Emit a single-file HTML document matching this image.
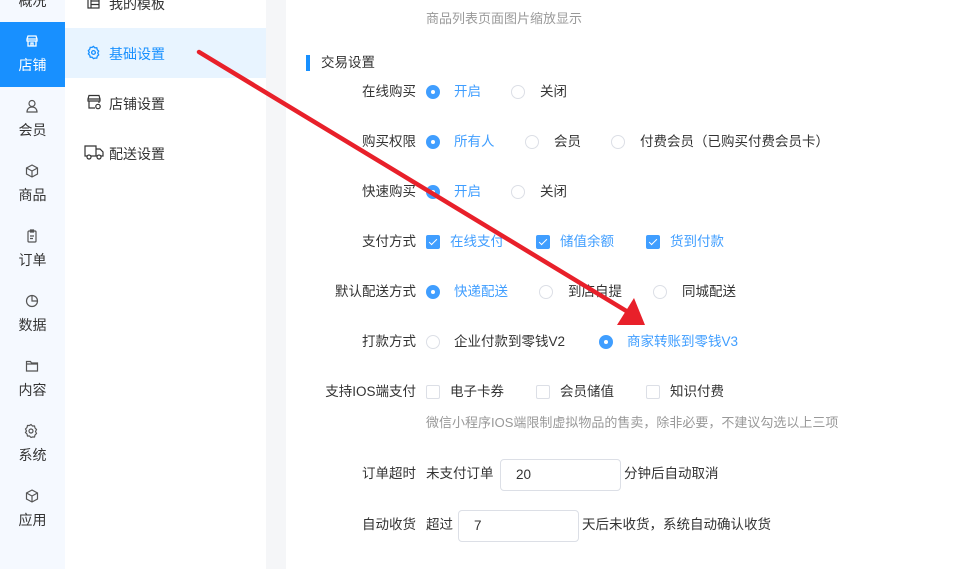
<!DOCTYPE html>
<html><head><meta charset="utf-8"><style>
*{margin:0;padding:0;box-sizing:border-box}
body{width:977px;height:569px;overflow:hidden;position:relative;background:#fff;font-family:"Liberation Sans","Noto Sans CJK SC",sans-serif;color:#333}
.a{position:absolute;white-space:nowrap}
#nav{position:absolute;left:0;top:0;width:65px;height:569px;background:#f5f9ff}
.ni{position:absolute;left:0;width:65px;text-align:center;font-size:14px;color:#333}
#sub{position:absolute;left:65px;top:0;width:201px;height:569px;background:#fff}
#gap{position:absolute;left:266px;top:0;width:20px;height:569px;background:#f5f6f8}
.t{font-size:13.5px;line-height:16px;margin-top:-8px}
.h{font-size:13px;line-height:16px;margin-top:-8px;color:#999}
.lbl{font-size:13.5px;line-height:16px;margin-top:-8px;text-align:right;width:120px;color:#333}
.r{position:absolute;width:14px;height:14px;border:1px solid #dcdfe6;border-radius:50%;margin:-7px 0 0 -7px;background:#fff}
.r.on{background:#409eff;border-color:#409eff}
.r.on:after{content:"";position:absolute;left:4px;top:4px;width:4px;height:4px;border-radius:50%;background:#fff}
.c{position:absolute;width:14px;height:14px;border:1px solid #dcdfe6;border-radius:2px;margin:-7px 0 0 -7px;background:#fff}
.c.on{background:#409eff;border-color:#409eff}
.c.on:after{content:"";position:absolute;left:4px;top:1px;width:3px;height:7px;border:solid #fff;border-width:0 1px 1px 0;transform:rotate(45deg)}
.blue{color:#409eff}
.inp{position:absolute;border:1px solid #dcdfe6;border-radius:4px;height:32px;width:121px;font-size:13.5px;line-height:30px;padding-left:15px}
</style></head><body>
<div id="nav">
<div class="ni" style="top:-9px;height:20px">概况</div>
<div style="position:absolute;left:0;top:22px;width:65px;height:65px;background:#1890ff"></div>
<svg class="a" style="left:25px;top:34px" width="14" height="14" viewBox="0 0 14 14" fill="none" stroke="#fff" stroke-width="1.3"><path d="M2 5h10M3 2h8l1 3v2H2V5zM3 7v5h8V7M6 12V9h2v3"/></svg>
<div class="ni" style="top:55px;color:#fff">店铺</div>
<svg class="a" style="left:25px;top:99px" width="14" height="14" viewBox="0 0 14 14" fill="none" stroke="#555" stroke-width="1.2"><circle cx="7" cy="4.5" r="3"/><path d="M2 13c0-3 2-5 5-5s5 2 5 5z"/></svg>
<div class="ni" style="top:120px">会员</div>
<svg class="a" style="left:25px;top:164px" width="14" height="14" viewBox="0 0 14 14" fill="none" stroke="#555" stroke-width="1.2"><path d="M7 1l5.5 3v6L7 13 1.5 10V4zM1.5 4L7 7l5.5-3M7 7v6"/></svg>
<div class="ni" style="top:185px">商品</div>
<svg class="a" style="left:25px;top:229px" width="14" height="14" viewBox="0 0 14 14" fill="none" stroke="#555" stroke-width="1.2"><rect x="3" y="2" width="8" height="11" rx="1"/><path d="M5.5 1h3v2h-3zM5 7h4M5 9.5h3"/></svg>
<div class="ni" style="top:250px">订单</div>
<svg class="a" style="left:25px;top:294px" width="14" height="14" viewBox="0 0 14 14" fill="none" stroke="#555" stroke-width="1.2"><circle cx="7" cy="7" r="5.5"/><path d="M7 1.5V7h5.5"/></svg>
<div class="ni" style="top:315px">数据</div>
<svg class="a" style="left:25px;top:359px" width="14" height="14" viewBox="0 0 14 14" fill="none" stroke="#555" stroke-width="1.2"><path d="M1.5 2.5h4l1 1.5h6v8h-11zM1.5 5h11"/></svg>
<div class="ni" style="top:380px">内容</div>
<svg class="a" style="left:23px;top:423px" width="16" height="16" viewBox="0 0 16 16" fill="none" stroke="#555" stroke-width="1.2"><path d="M8 1.5l1.5 1.5h2l.5 2 1.5 1.5-1 2 1 2-1.5 1.5-.5 2h-2L8 14.5 6.5 13h-2l-.5-2L2.5 9.5l1-1.5-1-2L4 4.5l.5-2h2z"/><circle cx="8" cy="8" r="2"/></svg>
<div class="ni" style="top:445px">系统</div>
<svg class="a" style="left:25px;top:489px" width="14" height="14" viewBox="0 0 14 14" fill="none" stroke="#555" stroke-width="1.2"><path d="M7 1l5.5 3v6L7 13 1.5 10V4zM1.5 4L7 7l5.5-3M7 7v6"/></svg>
<div class="ni" style="top:510px">应用</div>
</div>
<div id="sub">
<svg class="a" style="left:22px;top:-4px" width="13" height="13" viewBox="0 0 13 13" fill="none" stroke="#333" stroke-width="1.2"><rect x="1" y="1" width="11" height="11"/><path d="M4 1v11M4 5h8M4 8.5h8"/></svg>
<div class="a" style="left:44px;top:-6px;font-size:14px">我的模板</div>
<div style="position:absolute;left:0;top:28px;width:201px;height:50px;background:#e8f4ff"></div>
<svg class="a" style="left:21px;top:45px" width="15" height="15" viewBox="0 0 16 16" fill="none" stroke="#1890ff" stroke-width="1.4"><path d="M8 1.5l1.5 1.5h2l.5 2 1.5 1.5-1 2 1 2-1.5 1.5-.5 2h-2L8 14.5 6.5 13h-2l-.5-2L2.5 9.5l1-1.5-1-2L4 4.5l.5-2h2z"/><circle cx="8" cy="8" r="2"/></svg>
<div class="a" style="left:44px;top:44px;font-size:14px;color:#1890ff">基础设置</div>
<svg class="a" style="left:21px;top:94px" width="16" height="16" viewBox="0 0 16 16" fill="none" stroke="#333" stroke-width="1.2"><path d="M2 5h12M3 1.5h10l1 3.5v2H2V5zM3 7v7h6M13 7v2"/><circle cx="12" cy="12.5" r="2.2"/></svg>
<div class="a" style="left:44px;top:94px;font-size:14px">店铺设置</div>
<svg class="a" style="left:19px;top:144px" width="20" height="16" viewBox="0 0 20 16" fill="none" stroke="#333" stroke-width="1.2"><path d="M1 2h11v10H1zM12 5h4l3 3v4h-7"/><circle cx="5" cy="13" r="2" fill="#fff"/><circle cx="15" cy="13" r="2" fill="#fff"/></svg>
<div class="a" style="left:44px;top:144px;font-size:14px">配送设置</div>
</div>
<div id="gap"></div>

<div class="a h" style="left:426px;top:19px">商品列表页面图片缩放显示</div>
<div class="a" style="left:306px;top:55px;width:4px;height:16px;background:#1890ff"></div>
<div class="a t" style="left:321px;top:63px">交易设置</div>

<div class="a lbl" style="left:296px;top:92px">在线购买</div>
<div class="r on" style="left:433px;top:92px"></div><div class="a t blue" style="left:454px;top:92px">开启</div>
<div class="r" style="left:518px;top:92px"></div><div class="a t" style="left:540px;top:92px">关闭</div>

<div class="a lbl" style="left:296px;top:142px">购买权限</div>
<div class="r on" style="left:433px;top:142px"></div><div class="a t blue" style="left:454px;top:142px">所有人</div>
<div class="r" style="left:532px;top:142px"></div><div class="a t" style="left:554px;top:142px">会员</div>
<div class="r" style="left:618px;top:142px"></div><div class="a t" style="left:640px;top:142px">付费会员（已购买付费会员卡）</div>

<div class="a lbl" style="left:296px;top:192px">快速购买</div>
<div class="r on" style="left:433px;top:192px"></div><div class="a t blue" style="left:454px;top:192px">开启</div>
<div class="r" style="left:518px;top:192px"></div><div class="a t" style="left:540px;top:192px">关闭</div>

<div class="a lbl" style="left:296px;top:242px">支付方式</div>
<div class="c on" style="left:433px;top:242px"></div><div class="a t blue" style="left:450px;top:242px">在线支付</div>
<div class="c on" style="left:543px;top:242px"></div><div class="a t blue" style="left:560px;top:242px">储值余额</div>
<div class="c on" style="left:653px;top:242px"></div><div class="a t blue" style="left:670px;top:242px">货到付款</div>

<div class="a lbl" style="left:296px;top:292px">默认配送方式</div>
<div class="r on" style="left:433px;top:292px"></div><div class="a t blue" style="left:454px;top:292px">快递配送</div>
<div class="r" style="left:546px;top:292px"></div><div class="a t" style="left:568px;top:292px">到店自提</div>
<div class="r" style="left:660px;top:292px"></div><div class="a t" style="left:682px;top:292px">同城配送</div>

<div class="a lbl" style="left:296px;top:342px">打款方式</div>
<div class="r" style="left:433px;top:342px"></div><div class="a t" style="left:454px;top:342px">企业付款到零钱V2</div>
<div class="r on" style="left:606px;top:342px"></div><div class="a t blue" style="left:627px;top:342px">商家转账到零钱V3</div>

<div class="a lbl" style="left:296px;top:392px">支持IOS端支付</div>
<div class="c" style="left:433px;top:392px"></div><div class="a t" style="left:450px;top:392px">电子卡券</div>
<div class="c" style="left:543px;top:392px"></div><div class="a t" style="left:560px;top:392px">会员储值</div>
<div class="c" style="left:653px;top:392px"></div><div class="a t" style="left:670px;top:392px">知识付费</div>
<div class="a h" style="left:426px;top:423px">微信小程序IOS端限制虚拟物品的售卖，除非必要，不建议勾选以上三项</div>

<div class="a lbl" style="left:296px;top:474px">订单超时</div>
<div class="a t" style="left:426px;top:474px">未支付订单</div>
<div class="inp" style="left:500px;top:459px">20</div>
<div class="a t" style="left:624px;top:474px">分钟后自动取消</div>

<div class="a lbl" style="left:296px;top:525px">自动收货</div>
<div class="a t" style="left:426px;top:525px">超过</div>
<div class="inp" style="left:458px;top:510px">7</div>
<div class="a t" style="left:582px;top:525px">天后未收货，系统自动确认收货</div>

<svg class="a" style="left:0;top:0" width="977" height="569"><line x1="199" y1="52" x2="628" y2="312" stroke="#e8202a" stroke-width="4.5" stroke-linecap="round"/><polygon points="645,325 617,325 634,298" fill="#e8202a"/></svg>
</body></html>
